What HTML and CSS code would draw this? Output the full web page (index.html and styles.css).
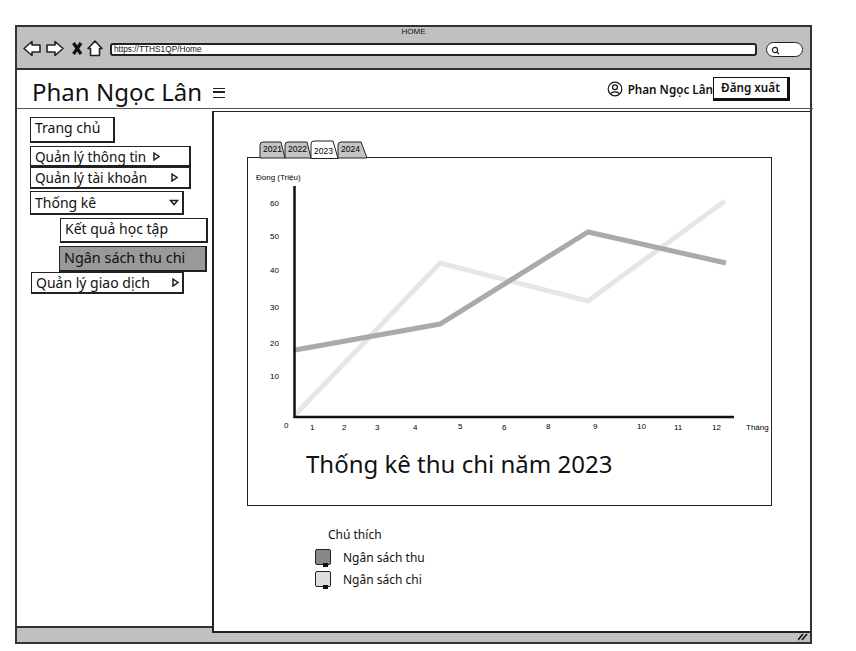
FILE: index.html
```html
<!DOCTYPE html>
<html lang="en">
<head>
    <meta charset="UTF-8">
    <meta name="viewport" content="width=device-width, initial-scale=1.0">
    <title>Phan Ngọc Lân</title>
    <link rel="stylesheet" href="styles.css">
</head>
<body>
    <div class="window">
        <div class="titleBar">
            <div class="pageName">HOME</div>
            <div class="toolRow">
                <svg class="navIcons" width="83" height="20" viewBox="0 0 83 20">
                    <path d="M1 9.500 L9 2.500 V6 H17 V13 H9 V16.500 Z" fill="#fff" stroke="#222" stroke-width="1.600" stroke-linejoin="round"/>
                    <path d="M40 9.500 L32 2.500 V6 H24 V13 H32 V16.500 Z" fill="#fff" stroke="#222" stroke-width="1.600" stroke-linejoin="round"/>
                    <path d="M50.500 4 L58 15 M58 4 L50.500 15" fill="none" stroke="#111" stroke-width="3.200"/>
                    <path d="M65 9.500 L72 2 L79 9.500 H76.500 V16.500 H67.500 V9.500 Z" fill="#fff" stroke="#222" stroke-width="1.600" stroke-linejoin="round"/>
                </svg>
                <div class="addressBar">https://TTHS1QP/Home</div>
                <div class="searchBox">
                    <svg width="9" height="9" viewBox="0 0 9 9"><circle cx="4" cy="4" r="2.600" fill="none" stroke="#222" stroke-width="1.200"/><path d="M6 6 L8 8" stroke="#222" stroke-width="1.200"/></svg>
                </div>
            </div>
        </div>

        <div class="pageHeader">
            <div class="brand">Phan Ngọc Lân <span class="burger"></span></div>
            <div class="userArea">
                <svg width="16" height="16" viewBox="0 0 16 16" fill="none" stroke="#111" stroke-width="1.200">
                    <circle cx="8" cy="8" r="6.800"/>
                    <circle cx="8" cy="6.300" r="2.400"/>
                    <path d="M3.600 12.800 C5 10.200 11 10.200 12.400 12.800"/>
                </svg>
                <span class="userName">Phan Ngọc Lân</span>
                <button class="logoutBtn">Đăng xuất</button>
            </div>
        </div>

        <div class="pageBody">
            <nav class="sideMenu">
                <div class="menuItem homeItem">Trang chủ</div>
                <div class="menuItem infoItem">Quản lý thông tin
                    <svg class="arrow" width="7" height="9" viewBox="0 0 7 9"><path d="M1 1 L6 4.500 L1 8 Z" fill="#fff" stroke="#222" stroke-width="1.500"/></svg>
                </div>
                <div class="menuItem accountItem">Quản lý tài khoản
                    <svg class="arrow" width="7" height="9" viewBox="0 0 7 9"><path d="M1 1 L6 4.500 L1 8 Z" fill="#fff" stroke="#222" stroke-width="1.500"/></svg>
                </div>
                <div class="menuItem statsItem">Thống kê
                    <svg class="arrow" width="10" height="7" viewBox="0 0 10 7"><path d="M1.500 1.500 H8.500 L5 5.500 Z" fill="#fff" stroke="#222" stroke-width="1.500"/></svg>
                </div>
                <div class="menuItem resultItem">Kết quả học tập</div>
                <div class="menuItem budgetItem">Ngân sách thu chi</div>
                <div class="menuItem dealItem">Quản lý giao dịch
                    <svg class="arrow" width="7" height="9" viewBox="0 0 7 9"><path d="M1 1 L6 4.500 L1 8 Z" fill="#fff" stroke="#222" stroke-width="1.500"/></svg>
                </div>
            </nav>

            <main class="mainPanel">
                <svg class="yearTabs" width="120" height="19" viewBox="0 0 120 19">
                    <path d="M13 18 V5 Q13 2 16 2 H34 L38 18 Z" fill="#c4c4c4" stroke="#222"/>
                    <path d="M38 18 V5 Q38 2 41 2 H60 L64 18 Z" fill="#c4c4c4" stroke="#222"/>
                    <path d="M91 18 V5 Q91 2 94 2 H114 L120 18 Z" fill="#c4c4c4" stroke="#222"/>
                    <path d="M64 18.500 V4 Q64 1 67 1 H86 L91 18.500 Z" fill="#fff" stroke="#222"/>
                    <text x="16" y="12">2021</text>
                    <text x="41" y="12">2022</text>
                    <text x="67" y="14">2023</text>
                    <text x="94" y="12">2024</text>
                </svg>

                <section class="chartBox">
                    <svg class="chart" width="524" height="289" viewBox="248 158 524 289">
                        <polyline points="295,415 440,263 588,301 725,201" fill="none" stroke="#e6e6e6" stroke-width="5"/>
                        <polyline points="295,350 440,324 588,232 726,263" fill="none" stroke="#aaaaaa" stroke-width="5"/>
                        <path d="M294.500 186 V417 H734" fill="none" stroke="#111" stroke-width="2.500"/>
                        <text x="256" y="180">Đồng (Triệu)</text>
                        <text x="270" y="206">60</text>
                        <text x="270" y="239">50</text>
                        <text x="270" y="273">40</text>
                        <text x="270" y="310">30</text>
                        <text x="270" y="346">20</text>
                        <text x="270" y="379">10</text>
                        <text x="284" y="428">0</text>
                        <text x="310" y="430">1</text>
                        <text x="342" y="430">2</text>
                        <text x="375" y="430">3</text>
                        <text x="413" y="430">4</text>
                        <text x="458" y="429">5</text>
                        <text x="502" y="430">6</text>
                        <text x="546" y="429">8</text>
                        <text x="593" y="429">9</text>
                        <text x="637" y="429">10</text>
                        <text x="674" y="430">11</text>
                        <text x="712" y="430">12</text>
                        <text x="746" y="430">Tháng</text>
                    </svg>
                    <h2 class="chartTitle">Thống kê thu chi năm 2023</h2>
                </section>

                <div class="legend">
                    <div class="legendTitle">Chú thích</div>
                    <div class="legendRow"><span class="swatch swatchIn"></span>Ngân sách thu</div>
                    <div class="legendRow"><span class="swatch swatchOut"></span>Ngân sách chi</div>
                </div>
            </main>
        </div>

        <div class="statusBar">
            <svg class="grip" width="10" height="8" viewBox="0 0 10 8"><path d="M0 7 L5 1 M4 7 L9 1" stroke="#111" stroke-width="1.600"/></svg>
        </div>
    </div>
</body>
</html>
```

FILE: styles.css
```css
* {
    box-sizing: border-box;
}

body {
    margin: 0;
    padding: 25px 0 0 15px;
    background-color: #fff;
    color: #111;
    font-family: "Noto Sans", sans-serif;
}

.window {
    width: 797px;
    height: 619px;
    border: 2px solid #333;
    display: flex;
    flex-direction: column;
}

.titleBar {
    height: 43px;
    background-color: #c0c0c0;
    border-bottom: 2px solid #333;
    flex-shrink: 0;
}

.pageName {
    font-family: "Liberation Sans", sans-serif;
    font-size: 8px;
    text-align: center;
    height: 10px;
}

.toolRow {
    display: flex;
    align-items: center;
    padding-left: 6px;
    margin-top: 2px;
}

.addressBar {
    width: 647px;
    height: 13px;
    margin-left: 4px;
    padding-left: 2px;
    background-color: #fff;
    border: 2px solid #222;
    border-radius: 3px;
    font-family: "Liberation Sans", sans-serif;
    font-size: 8.300px;
    line-height: 9px;
}

.searchBox {
    width: 37px;
    height: 15px;
    margin-left: 9px;
    padding: 2px 0 0 4px;
    background-color: #fff;
    border: 1.500px solid #222;
    border-radius: 8px;
    line-height: 9px;
}

.pageHeader {
    height: 39px;
    margin-right: -3px;
    padding: 0 23px 0 15px;
    border-bottom: 1px solid #555;
    display: flex;
    justify-content: space-between;
    align-items: center;
    flex-shrink: 0;
}

.brand {
    padding-top: 4px;
    font-size: 24px;
    display: flex;
    align-items: center;
    gap: 11px;
}

.burger {
    width: 12px;
    height: 10px;
    border-top: 1.500px solid #222;
    border-bottom: 1.500px solid #222;
    position: relative;
    margin-top: 3px;
}

.burger::after {
    content: "";
    position: absolute;
    left: 0;
    right: 0;
    top: 2.500px;
    height: 1.500px;
    background-color: #222;
}

.userArea {
    display: flex;
    align-items: center;
}

.userName {
    margin-left: 5px;
    font-size: 11.700px;
    font-weight: 600;
}

.logoutBtn {
    width: 77px;
    height: 24px;
    margin-left: 0;
    padding: 0 0 2px;
    background-color: #fff;
    border: 1.500px solid #111;
    border-right-width: 3px;
    border-bottom-width: 3px;
    color: #111;
    font-family: "Noto Sans", sans-serif;
    font-size: 11.700px;
    font-weight: 600;
}

.pageBody {
    flex: 1;
    display: flex;
    min-height: 0;
}

.sideMenu {
    width: 195px;
    flex-shrink: 0;
    padding-top: 8px;
    font-size: 14px;
}

.menuItem {
    display: flex;
    align-items: center;
    justify-content: space-between;
    background-color: #fff;
    border: 1.500px solid #222;
    border-right-width: 2px;
    border-bottom-width: 2px;
    padding-left: 4px;
    white-space: nowrap;
}

.homeItem {
    width: 85px;
    height: 26px;
    margin: 0 0 3px 13px;
    padding-bottom: 4px;
}

.infoItem {
    width: 161px;
    height: 21px;
    margin-left: 13px;
    padding-right: 29px;
    font-size: 13.600px;
}

.accountItem {
    width: 161px;
    height: 22px;
    margin: 0 0 2px 13px;
    padding-right: 11px;
    font-size: 13.600px;
}

.statsItem {
    width: 154px;
    height: 24px;
    margin: 0 0 3px 13px;
    padding-right: 3px;
}

.resultItem {
    width: 148px;
    height: 25px;
    margin: 0 0 3px 43px;
    padding-bottom: 3px;
}

.budgetItem {
    width: 148px;
    height: 26px;
    margin: 0 0 0 42px;
    padding-bottom: 2px;
    background-color: #999;
    font-size: 14.400px;
}

.dealItem {
    width: 153px;
    height: 22px;
    margin-left: 14px;
    padding-right: 3px;
}

.arrow {
    flex-shrink: 0;
}

.mainPanel {
    flex: 1;
    margin: 2px 0 -7px;
    padding: 28px 0 0 33px;
    background-color: #fff;
    border-left: 2px solid #222;
    border-top: 1.500px solid #222;
    border-bottom: 2px solid #222;
    position: relative;
}

.yearTabs {
    display: block;
    margin-bottom: -2px;
    overflow: visible;
}

.yearTabs text {
    font-family: "Liberation Sans", sans-serif;
    font-size: 8.500px;
}

.chartBox {
    width: 525px;
    height: 349px;
    border: 1.500px solid #222;
}

.chart {
    display: block;
}

.chart text {
    font-family: "Liberation Sans", sans-serif;
    font-size: 8px;
}

.chartTitle {
    margin: 0 0 0 58px;
    font-size: 24px;
    font-weight: 400;
    line-height: 33px;
}

.legend {
    margin: 20px 0 0 68px;
    font-size: 12px;
}

.legendTitle {
    margin-left: 13px;
    line-height: 17px;
    margin-bottom: 3px;
}

.legendRow {
    display: flex;
    align-items: center;
    gap: 12px;
    height: 22px;
}

.swatch {
    width: 16px;
    height: 16px;
    border: 1.500px solid #222;
    border-radius: 2px;
    position: relative;
}

.swatch::after {
    content: "";
    position: absolute;
    right: 2px;
    bottom: -3px;
    width: 5px;
    height: 4px;
    background-color: #111;
}

.swatchIn {
    background-color: #888;
}

.swatchOut {
    background-color: #ddd;
}

.statusBar {
    height: 16px;
    background-color: #c0c0c0;
    border-top: 2px solid #333;
    flex-shrink: 0;
    display: flex;
    justify-content: flex-end;
    align-items: flex-end;
    padding: 0 2px 1px 0;
}
```
